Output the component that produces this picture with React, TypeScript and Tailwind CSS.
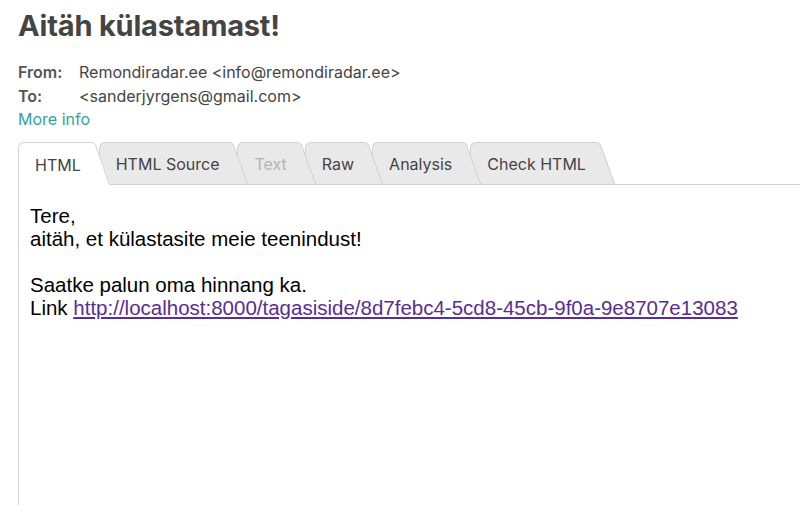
import React from 'react';

type Tab = {
  label: string;
  active?: boolean;
  disabled?: boolean;
  z: string;
};

const tabs: Tab[] = [
  { label: 'HTML', active: true, z: 'z-[6]' },
  { label: 'HTML Source', z: 'z-[5]' },
  { label: 'Text', disabled: true, z: 'z-[4]' },
  { label: 'Raw', z: 'z-[3]' },
  { label: 'Analysis', z: 'z-[2]' },
  { label: 'Check HTML', z: 'z-[1]' },
];

function TabItem({ tab, first }: { tab: Tab; first: boolean }) {
  const h = tab.active ? 43 : 42;
  const fill = tab.active ? '#ffffff' : '#e9e9e9';
  const text = tab.disabled ? 'text-[#b4b4b4]' : 'text-[#444]';

  return (
    <div className={`relative flex ${tab.z} ${first ? '' : '-ml-[11px]'}`}>
      <div
        className={`flex items-center pl-4 pr-[9px] pt-[2px] border-t border-l border-[#d2d2d2] rounded-tl-[6px] ${
          tab.active ? 'h-[43px] bg-white' : 'h-[42px] bg-[#e9e9e9]'
        } ${text}`}
      >
        <span className="text-[16px] font-['Inter',sans-serif]">{tab.label}</span>
      </div>
      <svg width="20" height={h} viewBox={`0 0 20 ${h}`} className="block">
        <path d={`M0 0 H1.5 Q4.5 0 6 3 L20 ${h} H0 Z`} fill={fill} />
        <path d={`M0 0.5 H1.5 Q4.2 0.5 5.6 3.4 L19.6 ${h}`} fill="none" stroke="#d2d2d2" strokeWidth="1" />
      </svg>
    </div>
  );
}

export default function App() {
  return (
    <div className="min-h-[505px] bg-white flex flex-col">
      <div className="pl-[18px] pt-2">
        <h1 className="text-[29px] leading-[36px] font-bold text-[#444] font-['Inter',sans-serif] tracking-[-0.2px]">
          Aitäh külastamast!
        </h1>

        <div className="mt-[17px] text-[16px] leading-[23.5px] font-['Inter',sans-serif]">
          <div className="flex">
            <span className="w-[61px] font-semibold text-[#555]">From:</span>
            <span className="text-[#444]">Remondiradar.ee &lt;info@remondiradar.ee&gt;</span>
          </div>
          <div className="flex">
            <span className="w-[61px] font-semibold text-[#555]">To:</span>
            <span className="text-[#444]">&lt;sanderjyrgens@gmail.com&gt;</span>
          </div>
          <a className="block text-[#3a9e9e] text-[16px]">More info</a>
        </div>
      </div>

      <div className="ml-[18px] mt-[10px] flex-1 flex flex-col">
        <div className="relative z-10 flex items-start -mb-px">
          {tabs.map((t, i) => (
            <TabItem key={t.label} tab={t} first={i === 0} />
          ))}
        </div>
        <div className="flex-1 border-l border-t border-[#d2d2d2] bg-white pl-[11px] pt-[19px] text-[20.5px] leading-[23px] text-black font-['Liberation_Sans',Arial,sans-serif]">
          <p>Tere,</p>
          <p>aitäh, et külastasite meie teenindust!</p>
          <p>&nbsp;</p>
          <p>Saatke palun oma hinnang ka.</p>
          <p>
            Link{' '}
            <a className="text-[#5a2d91] underline" href="#">
              http://localhost:8000/tagasiside/8d7febc4-5cd8-45cb-9f0a-9e8707e13083
            </a>
          </p>
        </div>
      </div>
    </div>
  );
}
